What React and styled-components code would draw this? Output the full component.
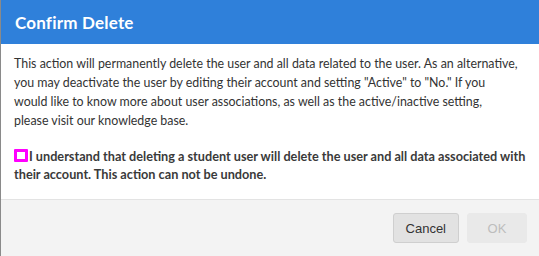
import React from "react";
import styled, { createGlobalStyle } from "styled-components";

const Global = createGlobalStyle`
  html, body { margin: 0; padding: 0; background: #8a8a8a; }
  body { font-family: Lato, "Liberation Sans", Arial, sans-serif; }
  #root { height: 256px; }
`;

const Modal = styled.div`
  margin-left: 1px;
  width: 538px;
  height: 256px;
  background: #fff;
  display: flex;
  flex-direction: column;
`;

const Header = styled.div`
  background: #2f80da;
  height: 44px;
  display: flex;
  align-items: center;
  padding: 0 14px;
  box-sizing: border-box;
`;

const Title = styled.h1`
  margin: 0;
  color: #fff;
  font-size: 17px;
  font-weight: 700;
  letter-spacing: 0.2px;
`;

const Body = styled.div`
  flex: 1;
  padding: 10px 10px 0 13px;
  color: #333;
  font-size: 12.4px;
  line-height: 19px;
  border-bottom: 1px solid #e3e3e3;
  white-space: nowrap;
`;

const Paragraph = styled.p`
  margin: 0 0 17px 0;
`;

const Confirm = styled.label`
  display: block;
  font-weight: 700;
  font-size: 12.7px;
  line-height: 18px;
  color: #3a3a3a;
`;

const Box = styled.span`
  display: inline-block;
  width: 8px;
  height: 7px;
  border: 3px solid #ff00ff;
  border-radius: 1px;
  background: #fff;
  vertical-align: -1px;
  margin-right: 1px;
`;

const Footer = styled.div`
  height: 56px;
  background: #f3f3f3;
  display: flex;
  justify-content: flex-end;
  align-items: center;
  gap: 8px;
  padding: 0 12px 0 0;
  box-sizing: border-box;
`;

const Button = styled.button`
  height: 30px;
  min-width: 60px;
  padding: 0 12px;
  border-radius: 3px;
  font-family: "Liberation Sans", Arial, sans-serif;
  font-size: 13px;
  border: 1px solid ${(p) => (p.disabled ? "#e9e9e9" : "#cfcfcf")};
  background: ${(p) => (p.disabled ? "#e9e9e9" : "#e2e2e2")};
  color: ${(p) => (p.disabled ? "#bdbdbd" : "#333")};
`;

export default function App() {
  return (
    <>
      <Global />
      <Modal>
        <Header>
          <Title>Confirm Delete</Title>
        </Header>
        <Body>
          <Paragraph>
            This action will permanently delete the user and all data related to the user. As an alternative,
            <br />
            you may deactivate the user by editing their account and setting "Active" to "No." If you
            <br />
            would like to know more about user associations, as well as the active/inactive setting,
            <br />
            please visit our knowledge base.
          </Paragraph>
          <Confirm>
            <Box />I understand that deleting a student user will delete the user and all data associated with
            <br />
            their account. This action can not be undone.
          </Confirm>
        </Body>
        <Footer>
          <Button>Cancel</Button>
          <Button disabled>OK</Button>
        </Footer>
      </Modal>
    </>
  );
}
